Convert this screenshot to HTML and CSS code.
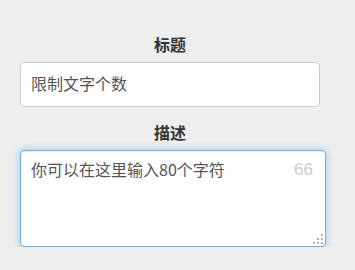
FILE: index.html
```html
<!DOCTYPE html>
<html lang="zh-CN">
<head>
<meta charset="utf-8">
<link rel="stylesheet" href="styles.css">
</head>
<body>
<form class="form">
  <label class="label" for="title">标题</label>
  <input class="field" id="title" type="text" value="限制文字个数">
  <label class="label label-desc" for="desc">描述</label>
  <div class="area-wrap">
    <textarea class="area" id="desc">你可以在这里输入80个字符</textarea>
    <span class="count">66</span>
    <svg class="grip" width="10" height="10" viewBox="0 0 10 10" aria-hidden="true">
      <rect x="8" y="0" width="2" height="2" fill="#b9b39f"/>
      <rect x="4" y="4" width="2" height="2" fill="#b9b39f"/>
      <rect x="8" y="4" width="2" height="2" fill="#b9b39f"/>
      <rect x="0" y="8" width="2" height="2" fill="#b9b39f"/>
      <rect x="4" y="8" width="2" height="2" fill="#b9b39f"/>
      <rect x="8" y="8" width="2" height="2" fill="#b9b39f"/>
    </svg>
  </div>
</form>
</body>
</html>
```

FILE: styles.css
```css
html, body {
  margin: 0;
  padding: 0;
  background: #eeeeee;
}
body {
  font-family: "Noto Sans CJK SC", "Noto Sans", sans-serif;
  font-size: 16px;
  color: #555;
}
.form {
  width: 300px;
  margin-left: 20px;
  padding-top: 34px;
  display: flex;
  flex-direction: column;
}
.label {
  display: block;
  text-align: center;
  font-weight: bold;
  font-size: 16px;
  line-height: 20px;
  color: #333;
  margin-bottom: 8px;
}
.label-desc {
  margin-top: 15px;
}
.field {
  box-sizing: border-box;
  width: 300px;
  height: 45px;
  margin: 0;
  padding: 0 10px 3px;
  border: 1px solid #cccccc;
  border-radius: 4px;
  background: #fff;
  font-family: inherit;
  font-size: 16px;
  color: #555;
  outline: none;
}
.area-wrap {
  position: relative;
  width: 306px;
  height: 97px;
}
.area {
  box-sizing: border-box;
  display: block;
  width: 306px;
  height: 97px;
  margin: 0;
  padding: 8px 10px;
  border: 1px solid #66afe9;
  border-radius: 4px;
  background: #fff;
  font-family: inherit;
  font-size: 16px;
  line-height: 20px;
  color: #555;
  resize: none;
  outline: none;
  box-shadow: inset 0 1px 1px rgba(0,0,0,.075), 0 0 8px rgba(102,175,233,.6);
}
.count {
  position: absolute;
  top: 9px;
  right: 13px;
  font-size: 17px;
  line-height: 22px;
  color: #cccccc;
  font-family: "Liberation Sans", sans-serif;
}
.grip {
  position: absolute;
  right: 3px;
  bottom: 3px;
  display: block;
}
```
